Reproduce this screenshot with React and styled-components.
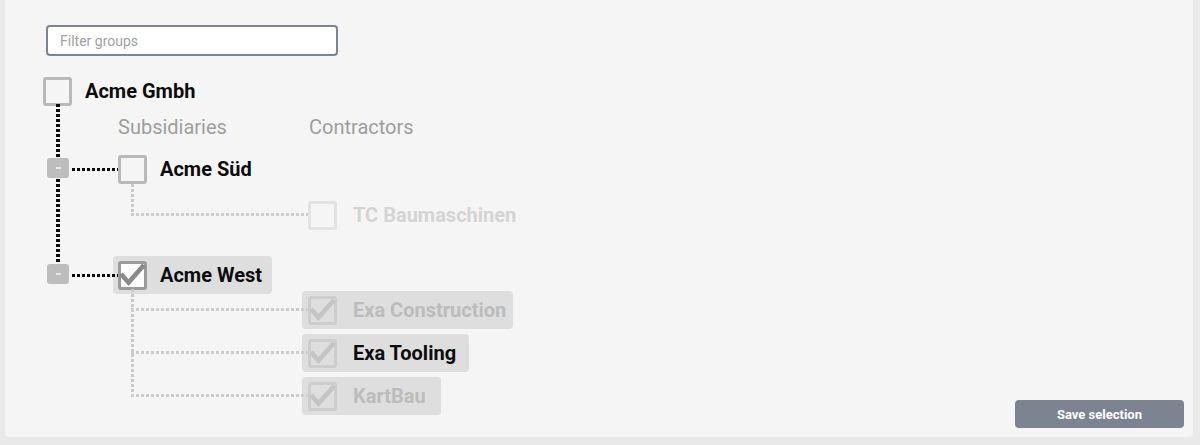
import styled, { createGlobalStyle } from 'styled-components';

const GlobalStyle = createGlobalStyle`
  html, body {
    margin: 0;
    padding: 0;
    background: #e9e9e9;
  }
  body {
    font-family: Roboto, "Liberation Sans", sans-serif;
  }
`;

const Page = styled.div`
    height: 445px;
    padding: 0 7px 8px 5px;
    box-sizing: border-box;
    display: flex;
`;

const Panel = styled.div`
    flex: 1;
    background: #f5f5f5;
    border-radius: 0 0 4px 4px;
    padding: 25px 9px 9px 33px;
    box-sizing: border-box;
    display: flex;
    flex-direction: column;
`;

const FilterInput = styled.input`
    flex: none;
    width: 292px;
    height: 31px;
    margin-left: 8px;
    box-sizing: border-box;
    border: 2px solid #7c8591;
    border-radius: 4px;
    background: #fff;
    padding: 0 12px;
    font-family: Roboto, "Liberation Sans", sans-serif;
    font-size: 14px;
    color: #333;
    outline: none;
    &::placeholder {
        color: #a2a2a2;
    }
`;

const Tree = styled.div`
    flex: 1 1 0;
    min-height: 0;
    margin-top: 16px;
    display: flex;
    flex-direction: column;
    align-items: flex-start;
`;

const Node = styled.div`
    position: relative;
    flex: none;
    display: inline-flex;
    align-items: center;
    gap: 13px;
    height: 38px;
    box-sizing: border-box;
    padding: 0 10px 0 5px;
    border-radius: 4px;
    background: ${props => props.$selected ? '#dedede' : 'transparent'};
`;

const SubNode = styled(Node)`
    gap: 16px;
    padding-left: 6px;
    padding-right: ${props => props.$padRight}px;
    &::before {
        content: '';
        position: absolute;
        left: -171px;
        width: 177px;
        top: 17px;
        height: 3px;
        background: repeating-linear-gradient(to right, #cdcdcd 0 3px, transparent 3px 5px);
    }
`;

const labelColors = {
    normal: '#0c0c0c',
    muted: '#d4d4d4',
    dim: '#bcbcbc',
};

const Label = styled.span`
    font-size: 20px;
    font-weight: 700;
    line-height: 1;
    color: ${props => labelColors[props.$tone || 'normal']};
    white-space: nowrap;
`;

const boxStyles = {
    plain: { border: '#b9b9b9', bg: 'transparent', tick: 'transparent' },
    faint: { border: '#e3e3e3', bg: 'transparent', tick: 'transparent' },
    checked: { border: '#9b9b9b', bg: '#ffffff', tick: '#8a8a8a' },
    checkedFaint: { border: '#cdcdcd', bg: '#dedede', tick: '#c4c4c4' },
};

const Box = styled.span`
    position: relative;
    flex: none;
    width: 29px;
    height: 29px;
    box-sizing: border-box;
    border: 3px solid ${props => boxStyles[props.$variant].border};
    border-radius: 3px;
    background: ${props => boxStyles[props.$variant].bg};
    & svg {
        position: absolute;
        left: -3px;
        top: -3px;
    }
`;

const Level1List = styled.div`
    position: relative;
    display: flex;
    flex-direction: column;
    align-self: stretch;
    &::before {
        content: '';
        position: absolute;
        left: 18px;
        top: -6px;
        width: 4px;
        height: 158px;
        background: repeating-linear-gradient(to bottom, #0a0a0a 0 3px, transparent 3px 5px);
    }
`;

const Headers = styled.div`
    display: grid;
    grid-template-columns: 191px auto;
    padding-left: 80px;
    margin-top: 5px;
    font-size: 20px;
    line-height: 24px;
    color: #9e9e9e;
`;

const Branch = styled.div`
    display: flex;
    margin-top: ${props => props.$top}px;
`;

const Gutter = styled.div`
    flex: none;
    width: 75px;
    height: 38px;
    display: flex;
    align-items: center;
`;

const Toggle = styled.button`
    position: relative;
    z-index: 2;
    flex: none;
    width: 22px;
    height: 20px;
    margin: 0 0 3px 9px;
    padding: 0;
    border: none;
    border-radius: 3px;
    background: #bdbdbd;
    display: flex;
    align-items: center;
    justify-content: center;
    cursor: pointer;
`;

const Dash = styled.span`
    width: 5px;
    height: 2px;
    background: #e6e6e6;
`;

const Connector = styled.span`
    position: relative;
    z-index: 1;
    flex: 1;
    height: 3px;
    margin: 0 -5px 0 3px;
    background: repeating-linear-gradient(to right, #0a0a0a 0 3px, transparent 3px 5px);
`;

const Column = styled.div`
    display: flex;
    flex-direction: column;
    align-items: flex-start;
`;

const SubList = styled.div`
    position: relative;
    display: flex;
    flex-direction: column;
    align-items: flex-start;
    gap: 5px;
    margin-top: ${props => props.$top}px;
    padding-left: 189px;
    &::before {
        content: '';
        position: absolute;
        left: 18px;
        width: 3px;
        top: ${props => props.$reach}px;
        bottom: 18px;
        background: repeating-linear-gradient(to bottom, #c9c9c9 0 3px, transparent 3px 5px);
    }
`;

const Footer = styled.div`
    flex: none;
    display: flex;
    justify-content: flex-end;
`;

const SaveButton = styled.button`
    width: 169px;
    height: 28px;
    border: none;
    border-radius: 4px;
    background: #7b8490;
    color: #fff;
    font-family: Roboto, "Liberation Sans", sans-serif;
    font-size: 13px;
    font-weight: 700;
    cursor: pointer;
`;

const Checkbox = ({ variant }) => (
    <Box $variant={variant}>
        {(variant === 'checked' || variant === 'checkedFaint') && (
            <svg width="29" height="29" viewBox="0 0 29 29">
                <polyline
                    points="3,13 10.5,21.5 26,4"
                    fill="none"
                    stroke={boxStyles[variant].tick}
                    strokeWidth="4.6"
                    strokeLinejoin="miter"
                />
            </svg>
        )}
    </Box>
);

const branches = [
    {
        label: 'Acme Süd',
        box: 'plain',
        top: 11,
        sub: {
            top: 8,
            reach: -12,
            items: [{ label: 'TC Baumaschinen', box: 'faint', tone: 'muted', pad: 10 }],
        },
    },
    {
        label: 'Acme West',
        box: 'checked',
        selected: true,
        top: 22,
        sub: {
            top: -3,
            reach: -2,
            items: [
                { label: 'Exa Construction', box: 'checkedFaint', tone: 'dim', selected: true, pad: 7 },
                { label: 'Exa Tooling', box: 'checkedFaint', tone: 'normal', selected: true, pad: 13 },
                { label: 'KartBau', box: 'checkedFaint', tone: 'dim', selected: true, pad: 15 },
            ],
        },
    },
];

const App = () => {
    return (
        <>
            <GlobalStyle />
            <Page>
                <Panel>
                    <FilterInput placeholder="Filter groups" />
                    <Tree>
                        <Node>
                            <Checkbox variant="plain" />
                            <Label>Acme Gmbh</Label>
                        </Node>
                        <Level1List>
                            <Headers>
                                <span>Subsidiaries</span>
                                <span>Contractors</span>
                            </Headers>
                            {branches.map(branch => (
                                <Branch key={branch.label} $top={branch.top}>
                                    <Gutter>
                                        <Toggle aria-label="collapse"><Dash /></Toggle>
                                        <Connector />
                                    </Gutter>
                                    <Column>
                                        <Node $selected={branch.selected}>
                                            <Checkbox variant={branch.box} />
                                            <Label>{branch.label}</Label>
                                        </Node>
                                        <SubList $top={branch.sub.top} $reach={branch.sub.reach}>
                                            {branch.sub.items.map(item => (
                                                <SubNode key={item.label} $selected={item.selected} $padRight={item.pad}>
                                                    <Checkbox variant={item.box} />
                                                    <Label $tone={item.tone}>{item.label}</Label>
                                                </SubNode>
                                            ))}
                                        </SubList>
                                    </Column>
                                </Branch>
                            ))}
                        </Level1List>
                    </Tree>
                    <Footer>
                        <SaveButton>Save selection</SaveButton>
                    </Footer>
                </Panel>
            </Page>
        </>
    );
};

export default App;
